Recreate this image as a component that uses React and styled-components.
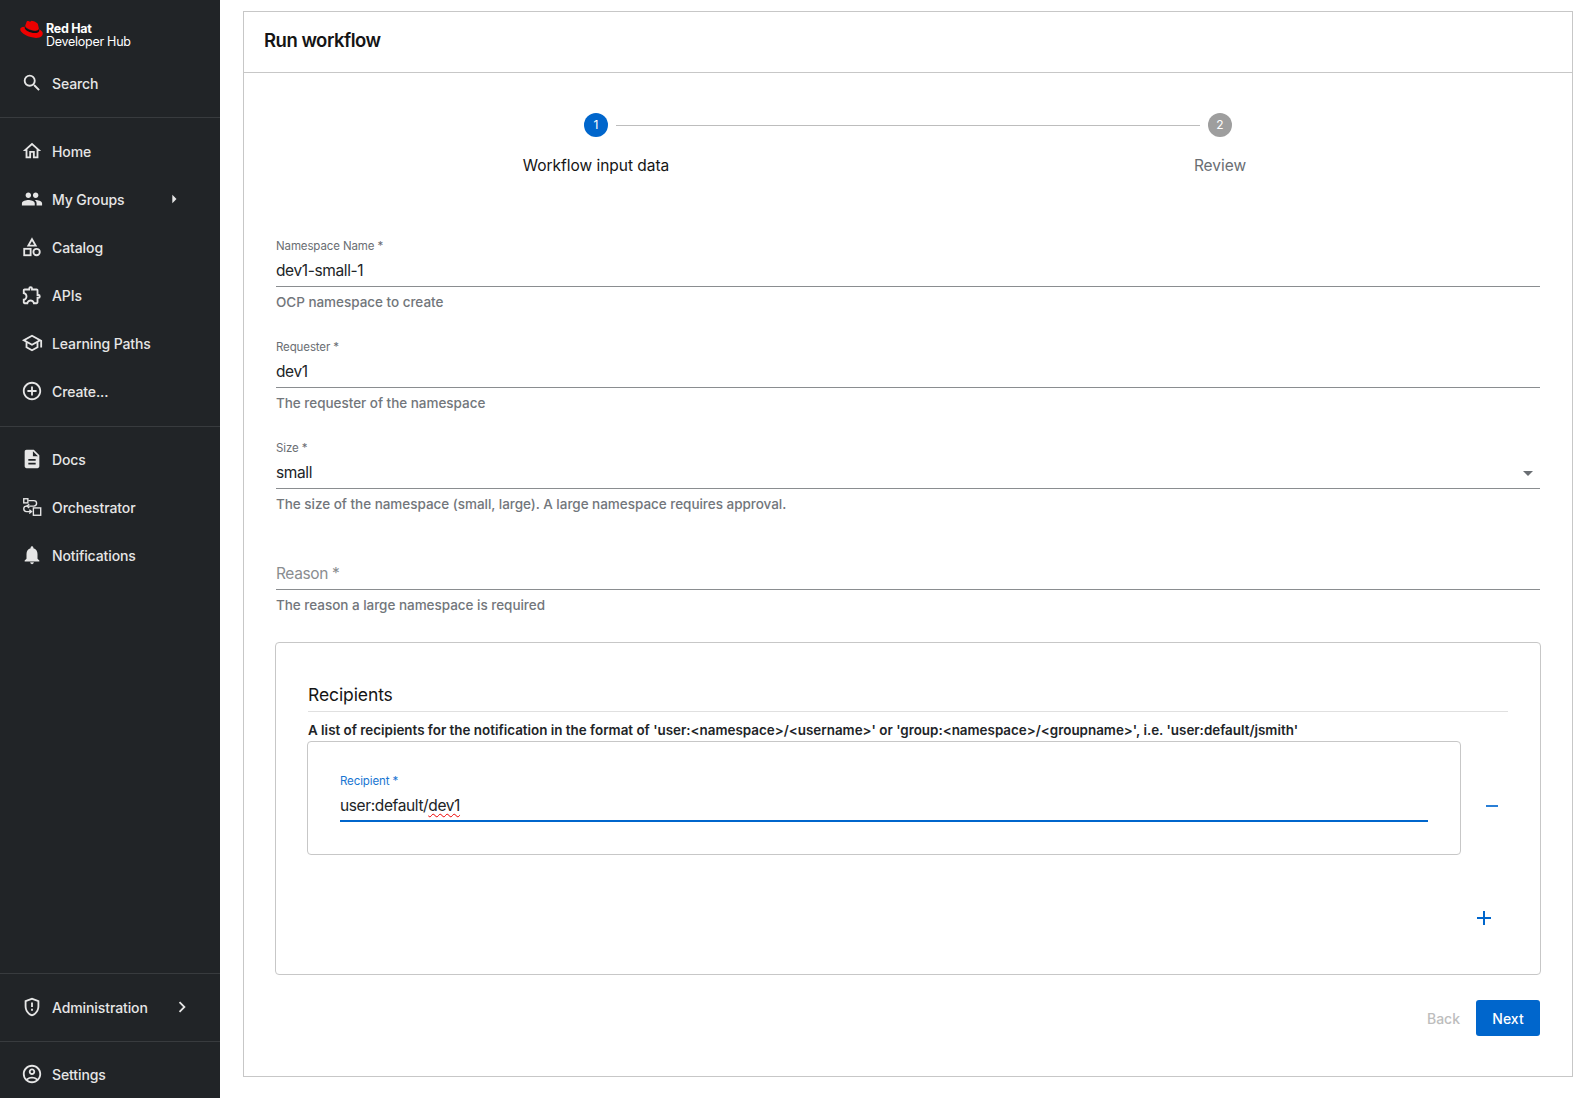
import styled, { createGlobalStyle } from 'styled-components'
import {
  MdSearch,
  MdOutlineHome,
  MdPeople,
  MdOutlineExtension,
  MdOutlineSchool,
  MdAddCircleOutline,
  MdDescription,
  MdNotifications,
  MdOutlineGppMaybe,
  MdOutlineAccountCircle,
  MdArrowRight,
  MdChevronRight,
  MdArrowDropDown,
} from 'react-icons/md'

const GlobalStyle = createGlobalStyle`
  html, body {
    margin: 0;
    padding: 0;
    background: #fff;
    font-family: Inter, "Liberation Sans", sans-serif;
  }
  * { box-sizing: border-box; }
`

const Shell = styled.div`
  display: flex;
  width: 1596px;
  height: 1098px;
  overflow: hidden;
`

const Sidebar = styled.nav`
  width: 220px;
  flex: none;
  background: #212427;
  color: #e8e8e8;
  display: flex;
  flex-direction: column;
`

const LogoBlock = styled.div`
  display: flex;
  align-items: flex-start;
  gap: 3px;
  padding: 20px 0 0 20px;
  height: 59px;
`

const LogoText = styled.div`
  color: #fff;
  font-size: 12.5px;
  line-height: 13px;
  padding-top: 2px;
  letter-spacing: -0.27px;
  b { display: block; font-weight: 700; }
`

const NavGroup = styled.div`
  padding: ${(p) => p.$pad || '0'};
  border-bottom: ${(p) => (p.$line ? '1px solid #383b3e' : 'none')};
  border-top: ${(p) => (p.$top ? '1px solid #383b3e' : 'none')};
`

const NavRow = styled.div`
  display: flex;
  align-items: center;
  height: 48px;
  padding-left: 20px;
  font-size: 14px;
  font-weight: 500;
  color: #e6e6e6;
  letter-spacing: -0.1px;
  svg { flex: none; }
`

const NavIcon = styled.span`
  width: 24px;
  height: 24px;
  margin-right: 8px;
  display: flex;
  align-items: center;
  justify-content: center;
  font-size: 22px;
`

const NavArrow = styled.span`
  display: flex;
  margin-left: auto;
  margin-right: ${(p) => p.$right || '36px'};
  font-size: ${(p) => p.$size || '20px'};
`

const Spacer = styled.div`
  flex: 1;
`

const Main = styled.main`
  flex: 1;
  padding: 11px 23px 21px 23px;
  display: flex;
`

const Card = styled.section`
  flex: 1;
  border: 1px solid #c7c7c7;
  display: flex;
  flex-direction: column;
`

const CardHeader = styled.header`
  height: 61px;
  flex: none;
  border-bottom: 1px solid #c7c7c7;
  padding: 0 0 5px 20px;
  display: flex;
  align-items: center;
  font-size: 18.5px;
  font-weight: 600;
  color: #151515;
  letter-spacing: -0.5px;
`

const CardBody = styled.div`
  flex: 1;
  padding: 40px 32px 0 32px;
`

const Stepper = styled.div`
  display: grid;
  grid-template-columns: 1fr 1fr;
  padding: 0 8px;
  margin-bottom: 61px;
`

const Step = styled.div`
  position: relative;
  display: flex;
  flex-direction: column;
  align-items: center;
  gap: 17px;
  font-size: 15.5px;
  line-height: 24px;
  letter-spacing: -0.03px;
  color: ${(p) => (p.$active ? '#151515' : '#6a6e73')};
`

const StepDot = styled.span`
  width: 24px;
  height: 24px;
  border-radius: 50%;
  background: ${(p) => (p.$active ? '#0066cc' : '#9e9e9e')};
  color: #fff;
  font-size: 12px;
  display: flex;
  align-items: center;
  justify-content: center;
`

const StepLine = styled.span`
  position: absolute;
  top: 12px;
  left: calc(50% + 20px);
  width: calc(100% - 40px);
  height: 1px;
  background: #bdbdbd;
`

const Field = styled.div`
  margin-bottom: ${(p) => p.$gap || '30px'};
`

const FieldLabel = styled.label`
  display: block;
  font-size: 11.5px;
  line-height: 14px;
  letter-spacing: -0.12px;
  color: ${(p) => (p.$focus ? '#1976d2' : '#6a6e73')};
  margin-bottom: 3px;
`

const FieldValue = styled.div`
  position: relative;
  height: 31px;
  font-size: 15.5px;
  line-height: 29px;
  letter-spacing: -0.38px;
  color: ${(p) => (p.$empty ? '#8a8d90' : '#212427')};
  border-bottom: ${(p) => (p.$focus ? '2px solid #0066cc' : '1px solid #8a8d90')};
  display: flex;
  justify-content: space-between;
  svg { font-size: 24px; color: #6a6e73; margin: 3px 0 0 0; }
`

const Helper = styled.p`
  margin: 8px 0 0;
  font-size: 13.5px;
  line-height: 15px;
  font-weight: 500;
  color: #72767b;
  letter-spacing: -0.03px;
`

const Squiggle = styled.span`
  text-decoration: underline wavy #e00;
  text-decoration-thickness: 1px;
  text-underline-offset: 2px;
`

const RecipientsBox = styled.div`
  border: 1px solid #c7c7c7;
  border-radius: 4px;
  height: 333px;
  margin: 29px -1px 0;
  padding: 40px 32px 0 32px;
`

const BoxTitle = styled.h3`
  margin: 0;
  font-size: 17.5px;
  line-height: 24px;
  font-weight: 400;
  color: #151515;
  padding-bottom: 4px;
  border-bottom: 1px solid #e0e0e0;
  letter-spacing: -0.1px;
`

const BoxDescription = styled.p`
  margin: 9px 0 2px;
  font-size: 13.4px;
  line-height: 18px;
  font-weight: 600;
  color: #212427;
  white-space: nowrap;
`

const ItemRow = styled.div`
  display: flex;
  align-items: center;
`

const ItemBox = styled.div`
  width: 1154px;
  height: 114px;
  margin-left: -1px;
  border: 1px solid #c7c7c7;
  border-radius: 4px;
  padding: 32px 32px 0 32px;
`

const IconButton = styled.span`
  color: ${(p) => p.$color || '#0066cc'};
  display: flex;
  align-items: center;
  justify-content: center;
`

const RemoveSlot = styled.div`
  flex: 1;
  display: flex;
  justify-content: center;
  padding: 16px 0 0 14px;
`

const AddRow = styled.div`
  display: flex;
  justify-content: flex-end;
  padding: 55px 16px 0 0;
`

const Footer = styled.div`
  display: flex;
  justify-content: flex-end;
  align-items: center;
  gap: 16px;
  margin-top: 25px;
`

const BackButton = styled.span`
  font-size: 14px;
  font-weight: 500;
  color: #bdbdbd;
`

const NextButton = styled.button`
  width: 64px;
  height: 36px;
  border: 0;
  border-radius: 3px;
  background: #0066cc;
  color: #fff;
  font: 500 14px Inter, "Liberation Sans", sans-serif;
`

const RedHatLogo = () => (
  <svg width="23" height="18" viewBox="0 2 24 19.200">
    <path
      fill="#111"
      d="M4.700 9.200C5 11 9 13.600 16 13.600c2 0 3.900-.8 3.900-2.600l.6 1.500c.2 2.300-2 3.500-4.700 3.500-5.800 0-11.200-3.500-11.200-5.700z"
    />
    <path
      fill="#e00"
      d="M16.009 13.386c1.577 0 3.86-.326 3.86-2.202a1.765 1.765 0 0 0-.04-.431l-.94-4.08c-.216-.898-.406-1.305-1.982-2.093-1.223-.625-3.888-1.658-4.676-1.658-.733 0-.947.946-1.822.946-.842 0-1.467-.706-2.255-.706-.757 0-1.25.515-1.63 1.576 0 0-1.06 2.99-1.197 3.424a.81.81 0 0 0-.028.245c0 1.162 4.577 4.974 10.71 4.974m4.101-1.435c.218 1.032.218 1.14.218 1.277 0 1.765-1.984 2.745-4.593 2.745-5.895.004-11.06-3.451-11.06-5.734a2.326 2.326 0 0 1 .19-.925C2.746 9.415 0 9.794 0 12.217c0 3.969 9.405 8.861 16.851 8.861 5.71 0 7.149-2.582 7.149-4.62 0-1.605-1.387-3.425-3.887-4.512"
    />
  </svg>
)

const CatalogIcon = () => (
  <svg width="22" height="22" viewBox="0 0 24 24" fill="none" stroke="currentColor" strokeWidth="2">
    <path d="M12 3.500 16 10.500H8z" />
    <rect x="3.500" y="14" width="7" height="7" />
    <circle cx="17" cy="17.500" r="3.500" />
  </svg>
)

const OrchestratorIcon = () => (
  <svg width="22" height="22" viewBox="0 0 24 24" fill="none" stroke="currentColor" strokeWidth="1.500">
    <rect x="3" y="3" width="4.500" height="4.500" />
    <rect x="13.500" y="13" width="8" height="8" />
    <path d="M8 5h6a3 3 0 0 1 0 6H6a3 3 0 0 0 0 6h5" />
    <path d="M9 9l-2.500 2L9 13M9 15l2.500 2L9 19" />
  </svg>
)

const PlusIcon = () => (
  <svg width="16" height="16" viewBox="0 0 16 16" fill="currentColor">
    <path d="M7 1h2v6h6v2H9v6H7V9H1V7h6z" />
  </svg>
)

const MinusIcon = () => (
  <svg width="14" height="14" viewBox="0 0 14 14" fill="#2a7fd6">
    <rect x="1" y="6" width="12" height="2" />
  </svg>
)

const mainNav = [
  { label: 'Home', icon: <MdOutlineHome /> },
  { label: 'My Groups', icon: <MdPeople />, arrow: true },
  { label: 'Catalog', icon: <CatalogIcon /> },
  { label: 'APIs', icon: <MdOutlineExtension /> },
  { label: 'Learning Paths', icon: <MdOutlineSchool /> },
  { label: 'Create...', icon: <MdAddCircleOutline /> },
]

const toolsNav = [
  { label: 'Docs', icon: <MdDescription /> },
  { label: 'Orchestrator', icon: <OrchestratorIcon /> },
  { label: 'Notifications', icon: <MdNotifications /> },
]

const NavItem = ({ label, icon, arrow }) => (
  <NavRow>
    <NavIcon>{icon}</NavIcon>
    {label}
    {arrow && (
      <NavArrow>
        <MdArrowRight />
      </NavArrow>
    )}
  </NavRow>
)

const TextField = ({ label, value, helper, select }) => (
  <Field>
    <FieldLabel>{label}</FieldLabel>
    <FieldValue>
      {value}
      {select && <MdArrowDropDown />}
    </FieldValue>
    <Helper>{helper}</Helper>
  </Field>
)

export default function App() {
  return (
    <Shell>
      <GlobalStyle />
      <Sidebar>
        <LogoBlock>
          <RedHatLogo />
          <LogoText>
            <b>Red Hat</b>
            Developer Hub
          </LogoText>
        </LogoBlock>
        <NavGroup $line $pad="0 0 10px">
          <NavItem label="Search" icon={<MdSearch />} />
        </NavGroup>
        <NavGroup $line $pad="9px 0 11px">
          {mainNav.map((item) => (
            <NavItem key={item.label} {...item} />
          ))}
        </NavGroup>
        <NavGroup $pad="8px 0 0">
          {toolsNav.map((item) => (
            <NavItem key={item.label} {...item} />
          ))}
        </NavGroup>
        <Spacer />
        <NavGroup $top $line $pad="9px 0 10px">
          <NavRow>
            <NavIcon>
              <MdOutlineGppMaybe />
            </NavIcon>
            Administration
            <NavArrow $right="27px" $size="22px">
              <MdChevronRight />
            </NavArrow>
          </NavRow>
        </NavGroup>
        <NavGroup $pad="8px 0 0">
          <NavItem label="Settings" icon={<MdOutlineAccountCircle />} />
        </NavGroup>
      </Sidebar>
      <Main>
        <Card>
          <CardHeader>Run workflow</CardHeader>
          <CardBody>
            <Stepper>
              <Step $active>
                <StepDot $active>1</StepDot>
                Workflow input data
                <StepLine />
              </Step>
              <Step>
                <StepDot>2</StepDot>
                Review
              </Step>
            </Stepper>
            <TextField label="Namespace Name *" value="dev1-small-1" helper="OCP namespace to create" />
            <TextField label="Requester *" value="dev1" helper="The requester of the namespace" />
            <TextField
              select
              label="Size *"
              value="small"
              helper="The size of the namespace (small, large). A large namespace requires approval."
            />
            <Field $gap="0">
              <FieldLabel>&nbsp;</FieldLabel>
              <FieldValue $empty>Reason *</FieldValue>
              <Helper>The reason a large namespace is required</Helper>
            </Field>
            <RecipientsBox>
              <BoxTitle>Recipients</BoxTitle>
              <BoxDescription>
                A list of recipients for the notification in the format of
                {" 'user:<namespace>/<username>' or 'group:<namespace>/<groupname>', i.e. 'user:default/jsmith'"}
              </BoxDescription>
              <ItemRow>
                <ItemBox>
                  <FieldLabel $focus>Recipient *</FieldLabel>
                  <FieldValue $focus>
                    <span>
                      user:default/<Squiggle>dev1</Squiggle>
                    </span>
                  </FieldValue>
                </ItemBox>
                <RemoveSlot>
                  <IconButton>
                    <MinusIcon />
                  </IconButton>
                </RemoveSlot>
              </ItemRow>
              <AddRow>
                <IconButton>
                  <PlusIcon />
                </IconButton>
              </AddRow>
            </RecipientsBox>
            <Footer>
              <BackButton>Back</BackButton>
              <NextButton>Next</NextButton>
            </Footer>
          </CardBody>
        </Card>
      </Main>
    </Shell>
  )
}
